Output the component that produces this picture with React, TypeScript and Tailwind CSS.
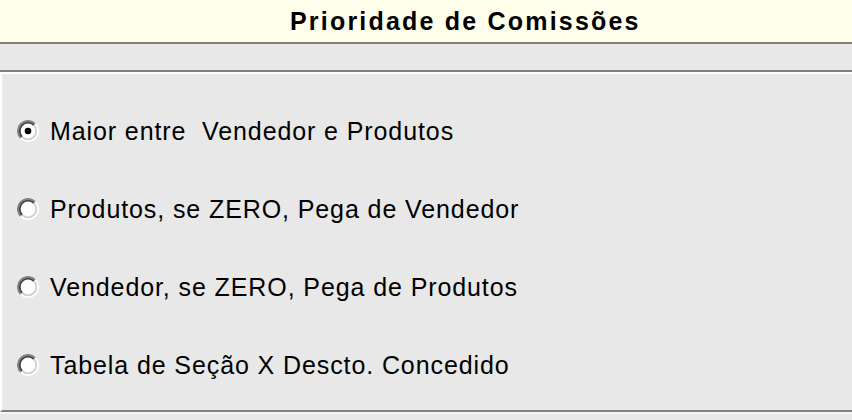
const OPTIONS = [
  { label: "Maior entre  Vendedor e Produtos", checked: true },
  { label: "Produtos, se ZERO, Pega de Vendedor", checked: false },
  { label: "Vendedor, se ZERO, Pega de Produtos", checked: false },
  { label: "Tabela de Seção X Descto. Concedido", checked: false },
];

const Radio = ({ checked }: { checked: boolean }) => (
  <svg width="22" height="22" viewBox="0 0 12 12" className="shrink-0">
    <circle cx="6" cy="6" r="4.6" fill="#ffffff" />
    {/* outer ring */}
    <path d="M 2.1 9.9 A 5.5 5.5 0 0 1 9.9 2.1" fill="none" stroke="#808080" strokeWidth="1" />
    <path d="M 9.9 2.1 A 5.5 5.5 0 0 1 2.1 9.9" fill="none" stroke="#ffffff" strokeWidth="1" />
    {/* inner ring */}
    <path d="M 2.8 9.2 A 4.5 4.5 0 0 1 9.2 2.8" fill="none" stroke="#404040" strokeWidth="1" />
    <path d="M 9.2 2.8 A 4.5 4.5 0 0 1 2.8 9.2" fill="none" stroke="#d4d0c8" strokeWidth="1" />
    {checked && <circle cx="6" cy="6" r="1.8" fill="#000000" />}
  </svg>
);

export default function App() {
  return (
    <div className="w-[852px] h-[420px] overflow-hidden bg-[#e8e8e8] font-['Liberation_Sans',Arial,sans-serif] text-black">
      <div className="h-[42px] bg-[#ffffeb] flex items-center pl-[290px]">
        <span className="text-[25px] font-bold tracking-[2.2px] leading-none">Prioridade de Comissões</span>
      </div>
      <div className="h-[30px] border-y-2 border-[#808080]" />
      <div className="h-[340px] border-t-2 border-l-2 border-white border-b-2 border-b-[#808080] flex flex-col gap-[38px] pt-[37px] pl-[15px]">
        {OPTIONS.map((o) => (
          <div key={o.label} className="h-[40px] flex items-center gap-[11px]">
            <Radio checked={o.checked} />
            <span className="text-[25px] tracking-[0.9px] leading-none whitespace-pre">{o.label}</span>
          </div>
        ))}
      </div>
      <div className="h-[2px] bg-[#f4f4f4]" />
    </div>
  );
}
